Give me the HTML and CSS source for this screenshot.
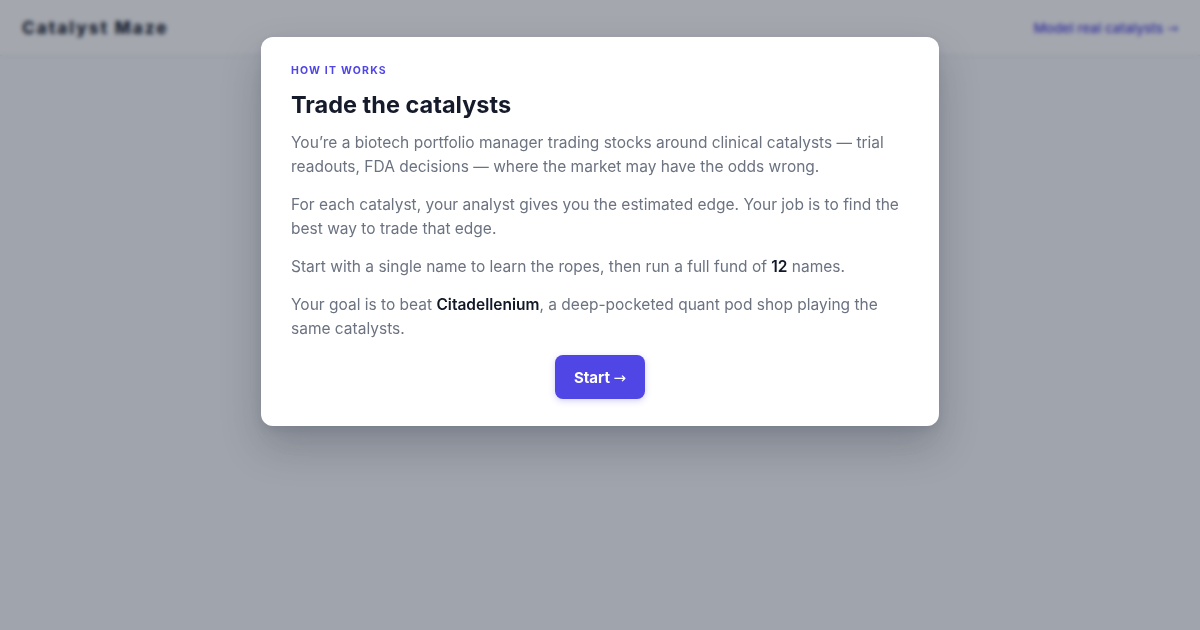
FILE: index.html
```html
<!DOCTYPE html>
<html lang="en">

<head>
    <meta charset="UTF-8">
    <meta name="viewport" content="width=device-width, initial-scale=1.0">
    <title>Catalyst Maze</title>
    <link rel="stylesheet" href="styles.css">
</head>

<body>
    <header class="topbar">
        <div class="brand">Catalyst Maze</div>
        <a class="topbar-link" href="#">Model real catalysts <span class="arrow">→</span></a>
    </header>

    <main class="board"></main>

    <!-- Intro dialog -->
    <div class="overlay">
        <div class="modal">
            <div class="eyebrow">HOW IT WORKS</div>
            <h2>Trade the catalysts</h2>
            <p>You’re a biotech portfolio manager trading stocks around clinical catalysts — trial readouts, FDA decisions — where the market may have the odds wrong.</p>
            <p>For each catalyst, your analyst gives you the estimated edge. Your job is to find the best way to trade that edge.</p>
            <p>Start with a single name to learn the ropes, then run a full fund of <b>12</b> names.</p>
            <p>Your goal is to beat <b>Citadellenium</b>, a deep-pocketed quant pod shop playing the same catalysts.</p>
            <div class="modal-actions">
                <button class="btn-start">Start <span class="arrow">→</span></button>
            </div>
        </div>
    </div>
</body>

</html>
```

FILE: styles.css
```css
* {
    box-sizing: border-box;
}

body {
    font-family: Inter, "Noto Sans", sans-serif;
    background-color: #f8fafc;
    margin: 0;
    height: 630px;
    color: #111827;
}

.topbar {
    height: 56px;
    display: flex;
    align-items: center;
    justify-content: space-between;
    padding: 0 22px;
    background: #ffffff;
    border-bottom: 1px solid #e5e7eb;
}

.brand {
    font-size: 17px;
    font-weight: 800;
    letter-spacing: 2px;
    color: #1f2937;
}

.topbar-link {
    font-size: 13.5px;
    font-weight: 500;
    color: #4f46e5;
    text-decoration: none;
}

.arrow {
    font-family: "DejaVu Sans", sans-serif;
    font-weight: normal;
}

.overlay {
    position: fixed;
    inset: 0;
    background: rgba(15, 23, 42, 0.38);
    backdrop-filter: blur(2px);
    display: flex;
    justify-content: center;
    align-items: flex-start;
    padding-top: 37px;
}

.modal {
    width: 678px;
    background: white;
    border-radius: 12px;
    padding: 28px 30px 27px;
    box-shadow: 0 20px 40px rgba(15, 23, 42, 0.22), 0 4px 10px rgba(15, 23, 42, 0.08);
}

.eyebrow {
    font-size: 10.5px;
    font-weight: 700;
    letter-spacing: 1.2px;
    color: #4f46e5;
    line-height: 12px;
}

h2 {
    margin: 13px 0 11px;
    font-size: 23.5px;
    line-height: 30px;
    font-weight: 700;
    color: #161b2b;
}

p {
    margin: 0 0 14px;
    font-size: 15.5px;
    line-height: 24px;
    color: #6b7280;
}

p b {
    color: #111827;
    font-weight: 600;
}

.modal-actions {
    display: flex;
    justify-content: center;
}

.btn-start {
    font-family: inherit;
    background-color: #4f46e5;
    color: white;
    height: 44px;
    width: 90px;
    border: none;
    border-radius: 8px;
    font-size: 15px;
    font-weight: 700;
    cursor: pointer;
    box-shadow: 0 2px 6px rgba(79, 70, 229, 0.25);
}

.btn-start:hover {
    background-color: #4338ca;
}
```
